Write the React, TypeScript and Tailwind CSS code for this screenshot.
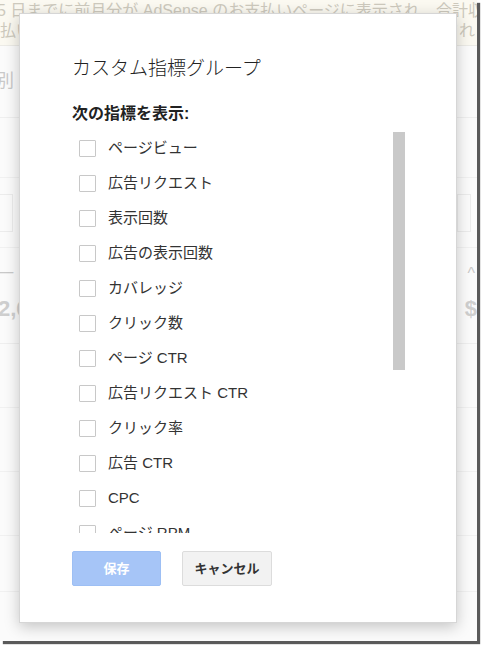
import React from "react";

const items = [
  "ページビュー",
  "広告リクエスト",
  "表示回数",
  "広告の表示回数",
  "カバレッジ",
  "クリック数",
  "ページ CTR",
  "広告リクエスト CTR",
  "クリック率",
  "広告 CTR",
  "CPC",
  "ページ RPM",
];

const font = { fontFamily: '"Liberation Sans", "Noto Sans CJK JP", sans-serif' };

export default function App() {
  return (
    <div className="w-[485px] h-[649px] bg-white overflow-hidden" style={font}>
      <div className="relative w-[477px] h-[641px] bg-[#fbfbfb] overflow-hidden shadow-[3px_3px_1px_#5a5a5a]">
        {/* faded background page */}
        <div className="flex flex-col text-[#c9c9c9]">
          <div className="h-[46px] bg-[#fbf9f1] border-b border-[#ecebe6] flex flex-col text-[16px] leading-[20px] text-[#cdc9bd] whitespace-nowrap pt-[1px]">
            <div className="-ml-[3px]">5 日までに前月分が AdSense のお支払いページに表示され、合計収益</div>
            <div className="flex justify-between pr-[2px]">
              <span>払い</span>
              <span>され</span>
            </div>
          </div>
          <div className="h-[72px] border-b border-[#efefef] flex items-center text-[18px] -ml-[4px]">
            <span>別</span>
          </div>
          <div className="h-[60px] border-b border-[#f1f1f1]" />
          <div className="h-[70px] border-b border-[#f1f1f1] flex items-center justify-between">
            <div className="w-[14px] h-[38px] border border-[#ececec] -ml-[1px]" />
            <div className="w-[14px] h-[38px] border border-[#ececec] mr-[6px]" />
          </div>
          <div className="h-[96px] border-b border-[#efefef] flex flex-col justify-between pt-[14px] pb-[18px]">
            <div className="flex justify-between text-[16px]">
              <span className="-ml-[2px]">一</span>
              <span className="mr-[2px]">^</span>
            </div>
            <div className="flex justify-between text-[22px] font-bold text-[#cfcfcf]">
              <span className="-ml-[2px]">2,6</span>
              <span className="mr-[0px]">$</span>
            </div>
          </div>
          <div className="h-[64px] border-b border-[#f1f1f1]" />
          <div className="h-[64px] border-b border-[#f1f1f1]" />
          <div className="h-[64px] border-b border-[#f1f1f1]" />
          <div className="h-[56px] border-b border-[#f1f1f1]" />
        </div>

        {/* dialog */}
        <div className="absolute left-[19px] top-[13px] w-[438px] h-[610px] bg-white border border-[#d6d6d6] shadow-[0_4px_14px_rgba(0,0,0,0.22)] flex flex-col pl-[52px] pt-[42px]">
          <div className="text-[19px] leading-[26px] font-light text-[#222]">カスタム指標グループ</div>
          <div className="mt-[22px] text-[16px] leading-[20px] font-bold text-[#222]">次の指標を表示:</div>
          <div className="relative mt-[7px] h-[402px] overflow-hidden w-[333px]">
            <div className="flex flex-col">
              {items.map((t) => (
                <div key={t} className="h-[35px] flex items-center pl-[7px] gap-[12px]">
                  <div className="w-[17px] h-[17px] border border-[#c8c8c8] rounded-[1px] bg-white shrink-0" />
                  <span className="text-[15px] text-[#333] whitespace-nowrap">{t}</span>
                </div>
              ))}
            </div>
            <div className="absolute right-0 top-[1px] w-[12px] h-[238px] bg-[#c9c9c9]" />
          </div>
          <div className="mt-[18px] flex gap-[21px]">
            <div className="w-[89px] h-[35px] rounded-[2px] bg-[#a6c5f7] border border-[#9dbff4] flex items-center justify-center text-white font-bold text-[13px]">
              保存
            </div>
            <div className="w-[90px] h-[35px] rounded-[2px] bg-[#f2f2f2] border border-[#dcdcdc] flex items-center justify-center text-[#333] font-bold text-[13px]">
              キャンセル
            </div>
          </div>
        </div>
      </div>
    </div>
  );
}
